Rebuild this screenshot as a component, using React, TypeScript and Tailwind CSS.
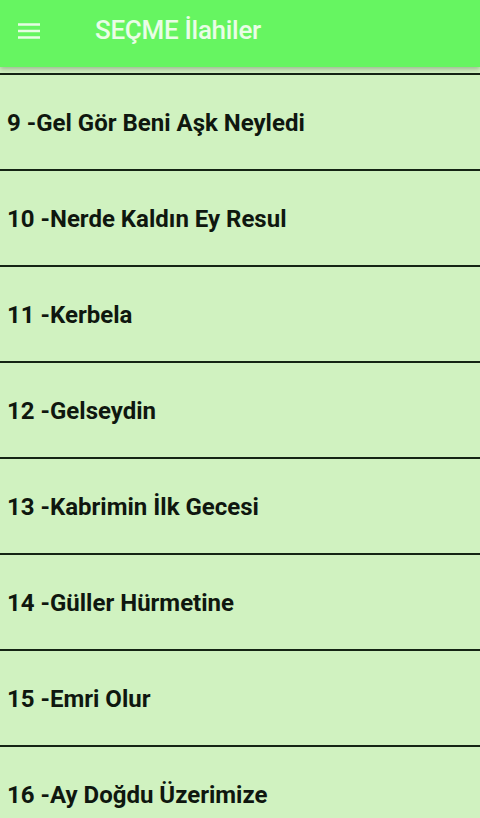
const songs = [
  "9 -Gel Gör Beni Aşk Neyledi",
  "10 -Nerde Kaldın Ey Resul",
  "11 -Kerbela",
  "12 -Gelseydin",
  "13 -Kabrimin İlk Gecesi",
  "14 -Güller Hürmetine",
  "15 -Emri Olur",
  "16 -Ay Doğdu Üzerimize",
];

export default function App() {
  return (
    <div className="h-[818px] w-[480px] overflow-hidden bg-[#d0f2c0] font-['Roboto',sans-serif]">
      {/* Toolbar */}
      <header className="relative z-10 flex h-[67px] items-center bg-[#66f561] pb-[6px] shadow-[0_2px_5px_rgba(0,0,0,0.25)]">
        <svg className="ml-[17px] h-[24px] w-[24px]" viewBox="0 0 24 24" fill="none">
          <path d="M1 5.5h22M1 12h22M1 18.5h22" stroke="#e6fde3" strokeWidth="2.4" />
        </svg>
        <h1 className="ml-[54px] text-[26px] font-medium tracking-[-0.3px] text-[#e9fde6]">SEÇME İlahiler</h1>
      </header>

      {/* Song list */}
      <ul className="mt-[6px]">
        {songs.map((title) => (
          <li
            key={title}
            className="flex h-[96px] items-center border-t-2 border-[#142414] pl-[7px] pt-[2px]"
          >
            <span className="text-[24px] font-bold text-[#0f170f]">{title}</span>
          </li>
        ))}
      </ul>
    </div>
  );
}
